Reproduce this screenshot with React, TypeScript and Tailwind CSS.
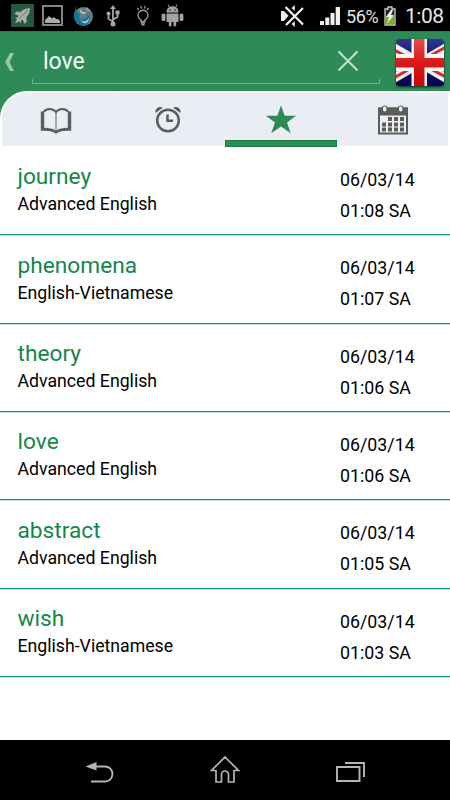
import React from 'react';

interface Entry {
  word: string;
  dictionary: string;
  date: string;
  time: string;
}

const entries: Entry[] = [
  { word: 'journey', dictionary: 'Advanced English', date: '06/03/14', time: '01:08 SA' },
  { word: 'phenomena', dictionary: 'English-Vietnamese', date: '06/03/14', time: '01:07 SA' },
  { word: 'theory', dictionary: 'Advanced English', date: '06/03/14', time: '01:06 SA' },
  { word: 'love', dictionary: 'Advanced English', date: '06/03/14', time: '01:06 SA' },
  { word: 'abstract', dictionary: 'Advanced English', date: '06/03/14', time: '01:05 SA' },
  { word: 'wish', dictionary: 'English-Vietnamese', date: '06/03/14', time: '01:03 SA' },
];

const StatusBar: React.FC = () => (
  <div className="h-[31px] shrink-0 bg-black flex items-center justify-between pl-[11px] pr-[7px]">
    <div className="flex items-center">
      <svg width="23" height="23" viewBox="0 0 23 23">
        <rect width="23" height="23" fill="#235a40" />
        <path d="M19 4c-4.500.2-7.500 1.700-9.500 4L5.500 7.500 3.500 10l4.200 1.800-1 1.500-2.700.4 2 1.400L4 19.500l4.300-2.200 1.400 2 .5-2.700 1.500-1 1.600 4.100 2.500-2-.5-4.400c2.300-2 3.500-5 3.700-9.300z" fill="#a9aeab" />
        <path d="M17 6 8 15" stroke="#235a40" strokeWidth=".6" fill="none" />
      </svg>
      <svg className="ml-2" width="21" height="21" viewBox="0 0 21 21">
        <rect x="1" y="1" width="19" height="19" fill="none" stroke="#929292" strokeWidth="1.800" />
        <path d="M3 18v-3l4-4 3 2.500 2-1.500 2 2h2l2 2v2z" fill="#aaa" />
      </svg>
      <svg className="ml-[10px]" width="21" height="23" viewBox="0 0 21 23">
        <circle cx="10.500" cy="12.500" r="9.500" fill="#657b82" />
        <path d="M5 1C2 5 3 9 7 10c-2 3 0 6 3 5 4 0 5-3 3-6 5 3 5 9 0 12C8 23 1 18 1 11 1 7 3 3 5 1z" fill="#16749a" />
        <path d="M7 4c0 3 3 5 7 4l-3 2c-3 0-5-3-4-6zM7 14c1 4 6 5 9 0 0 6-7 8-9 0z" fill="#b5c5ca" />
        <path d="M13 3c3 1 4 3 4 5l-4-2z" fill="#939b9e" />
      </svg>
      <svg className="ml-[12px]" width="14" height="22" viewBox="0 0 14 22">
        <path d="M7 3v16M7 16.500 2.500 14V9M7 14.500l4.500-2.500V7" fill="none" stroke="#a6a6a6" strokeWidth="1.800" />
        <path d="m7 0 3 4H4z" fill="#a6a6a6" />
        <circle cx="2.500" cy="8.500" r="2" fill="#a6a6a6" />
        <path d="M9.500 5.500h4v4h-4z" fill="#a6a6a6" />
        <circle cx="7" cy="19" r="2.500" fill="#a6a6a6" />
      </svg>
      <svg className="ml-[16px]" width="14" height="21" viewBox="0 0 13 21">
        <path d="M4.500 16.500v-1.700A5 5 0 1 1 8.500 14.800v1.700z" fill="none" stroke="#999" strokeWidth="1.400" />
        <path d="M4.500 18h4M5 19.800h3" stroke="#a8a8a8" strokeWidth="1.600" />
        <path d="M4.900 3.500 4.400.8M8.100 3.500 8.600.8M2.200 4.800.8 3M10.800 4.800 12.200 3" stroke="#999" strokeWidth="1.300" />
      </svg>
      <svg className="ml-[11px]" width="23" height="23" viewBox="0 0 23 23">
        <path d="M5.500 8.500C5.500 4.500 8 2.300 11.500 2.300s6 2.200 6 6.200zM5.500 9.500h12V18h-2.300v3.200a1.300 1.300 0 0 1-2.700 0V18h-2v3.200a1.300 1.300 0 0 1-2.700 0V18H5.500z" fill="#a3a3a3" />
        <rect x=".6" y="9.500" width="3.800" height="7.500" rx="1.600" fill="#a3a3a3" />
        <rect x="18.600" y="9.500" width="3.800" height="7.500" rx="1.600" fill="#a3a3a3" />
        <path d="m8.500 3.500-1.500-3M14.500 3.500l1.500-3" stroke="#a3a3a3" strokeWidth="1" />
        <circle cx="9" cy="6" r=".7" />
        <circle cx="14" cy="6" r=".7" />
      </svg>
    </div>
    <div className="flex items-center">
      <svg width="24" height="22" viewBox="0 0 24 22">
        <path d="M0 6h3l4.500 4.800L3 16H0zM10.500 3l3.300-3v6zM10.500 19l3.300 3v-6z" fill="#eee" />
        <path d="m4.500 2 17.500 17.500M22 3 5 20" stroke="#f3f3f3" strokeWidth="2.200" />
      </svg>
      <svg className="ml-[15px]" width="20" height="18" viewBox="0 0 20 18">
        <path d="M0 14h4v4H0zM5.300 10.500h4V18h-4zM10.500 6h4v12h-4zM15.700 0h4.300v18h-4.300z" fill="#f0f0f0" />
      </svg>
      <span className="ml-[6px] w-[34px] text-[18px] leading-[31px] tracking-[-0.4px] text-[#e4e4e4] pt-px whitespace-nowrap">56%</span>
      <svg className="ml-[3px]" width="14" height="20" viewBox="0 0 14 20">
        <path d="M2 3h3V1h4v2h3v16H2z" fill="#252b22" stroke="#cecece" strokeWidth="1.300" />
        <path d="M3 10h8v8H3z" fill="#72b900" />
        <path d="M8 4 3 11h3l-2 7 7-9H8l2-5z" fill="#f1f1f1" />
      </svg>
      <span className="ml-[8px] w-[38px] text-[21px] leading-[31px] tracking-[-0.5px] text-[#e6e6e6] pt-px whitespace-nowrap">1:08</span>
    </div>
  </div>
);

const Flag: React.FC = () => (
  <svg className="mt-[6px] h-[50px] w-[50px] drop-shadow-[0_1px_1px_rgba(0,0,0,0.7)]" viewBox="0 0 50 50">
    <defs>
      <clipPath id="flagClip">
        <rect x="1" y="1" width="48" height="47" rx="4" />
      </clipPath>
      <linearGradient id="flagBlue" x2="0" y2="1">
        <stop stopColor="#343794" />
        <stop offset=".4" stopColor="#14166d" />
        <stop offset="1" stopColor="#040451" />
      </linearGradient>
      <linearGradient id="flagRed" x2="0" y2="1">
        <stop stopColor="#e54d4c" />
        <stop offset=".5" stopColor="#d91818" />
        <stop offset="1" stopColor="#c70909" />
      </linearGradient>
    </defs>
    <g clipPath="url(#flagClip)">
      <path d="M0 0h50v50H0z" fill="url(#flagBlue)" />
      <path d="M-4 8 54 42M54 8-4 42" stroke="#f2f2f5" strokeWidth="9" />
      <path d="m-1 12 19 10M51 9 31 20M-1 40l19-11M51 39 32 29" stroke="#d82a2a" strokeWidth="3" />
      <path d="M16.500 0h15.500v50H16.500zM0 16h50v17H0z" fill="#f7f7f7" />
      <path d="M19 0h10.500v50H19zM0 20h50v9.500H0z" fill="url(#flagRed)" />
    </g>
  </svg>
);

const SearchHeader: React.FC = () => (
  <div className="h-[60px] shrink-0 flex bg-[#2e8b57] border-t border-[#38724f]">
    <svg className="mt-[20px] ml-[4px] h-[20px] w-[12px]" viewBox="0 0 12 20">
      <path d="M6 1h4L5.500 10l4.500 9H6L1.200 10z" fill="#99c7ac" />
    </svg>
    <div className="ml-[16px] mt-[9px] w-[348px] h-[43px] flex items-start justify-between relative">
      <span className="pl-[11px] text-[23px] leading-[24px] pt-[9px] text-[#f3faf5]">love</span>
      <svg className="mt-[9px] mr-[21px] h-[22px] w-[22px]" viewBox="0 0 22 22">
        <path d="m1.500 1.500 19 19M20.500 1.500l-19 19" stroke="#c5e0cf" strokeWidth="2" />
      </svg>
      <span className="absolute inset-x-0 bottom-0 h-[5px] border border-t-0 border-[#70b08b]" />
    </div>
    <div className="ml-[15px]">
      <Flag />
    </div>
  </div>
);

const BookIcon: React.FC = () => (
  <svg width="32" height="27" viewBox="0 0 32 27">
    <path d="M16 4v20" stroke="#62635f" strokeWidth="1" />
    <path d="M.8 4.500h3.400v16.300c5 0 8.500.7 11.800 2.900 3.300-2.200 6.800-2.900 11.800-2.900V4.500h3.400v19.300c-6 0-10 .2-13.200 1.800L16 26.800l-2-1.200C10.800 24 6.800 23.800.8 23.800z" fill="#5c5d5a" />
    <path d="M3.500 5C6.500.8 13 1 16 5c3-4 9.500-4.200 12.500 0" fill="none" stroke="#5c5d5a" strokeWidth="2" />
  </svg>
);

const AlarmIcon: React.FC = () => (
  <svg width="28" height="28" viewBox="0 0 28 28">
    <circle cx="14" cy="14.500" r="10.800" fill="none" stroke="#5c5d5a" strokeWidth="2.500" />
    <path d="M13.500 8.500v6.200H19" fill="none" stroke="#5c5d5a" strokeWidth="2.500" />
    <path d="M1.800 7C0 3.300 5-.5 9 1.600zM26.200 7C28 3.300 23-.5 19 1.600z" fill="#5c5d5a" />
  </svg>
);

const StarIcon: React.FC = () => (
  <svg width="32" height="30" viewBox="0 0 32 30">
    <path d="m16 .5 3.700 10.300h11.300l-9 6.700 3.800 10.700-9.800-6.700-9.800 6.700L10 17.500l-9-6.700h11.300z" fill="#2e8b57" />
  </svg>
);

const CalendarIcon: React.FC = () => (
  <svg width="32" height="30" viewBox="0 0 32 30">
    <rect x="2" y="3.500" width="28" height="25" fill="#edf0f4" stroke="#5c5d5a" strokeWidth="2" />
    <path d="M1 2.500h30v8H1z" fill="#5c5d5a" />
    <rect x="5.500" y="1" width="4.500" height="6" rx="2" fill="#edf0f4" stroke="#5c5d5a" strokeWidth="1.200" />
    <rect x="21.500" y="1" width="4.500" height="6" rx="2" fill="#edf0f4" stroke="#5c5d5a" strokeWidth="1.200" />
    <path d="M11 12h4v4h-4zM17 12h4v4h-4zM23 12h4v4h-4zM5 17.500h4v4H5zM11 17.500h4v4h-4zM17 17.500h4v4h-4zM23 17.500h4v4h-4zM5 22.500h4v4H5zM11 22.500h4v4h-4zM17 22.500h4v4h-4zM23 22.500h4v4h-4z" fill="#5c5d5a" />
  </svg>
);

const Tabs: React.FC = () => (
  <div className="h-[56px] shrink-0 bg-[#2e8b57]">
    <div className="h-full rounded-tl-[27px] bg-white pl-[2px] pr-[2px] pt-[2px]">
      <div className="h-[53px] rounded-tl-[25px] bg-[#eaedf3] grid grid-cols-4">
        <div className="flex justify-center pt-[14px] pr-[3px] border-r border-[#edf0f5]">
          <BookIcon />
        </div>
        <div className="flex justify-center pt-[13px] pr-[2px]">
          <AlarmIcon />
        </div>
        <div className="h-[54px] flex flex-col items-center justify-between pt-[12px]">
          <StarIcon />
          <div className="h-[7px] w-full bg-[#2e8b57] border border-[#15803f]" />
        </div>
        <div className="flex justify-center pt-[12px] pl-[2px]">
          <CalendarIcon />
        </div>
      </div>
    </div>
  </div>
);

const EntryRow: React.FC<{ entry: Entry }> = ({ entry }) => (
  <li className="h-[88.35px] flex justify-between border-b border-[#16918b] shadow-[0_1px_0_rgba(22,145,139,0.3)] pl-[17.500px] pr-[34px]">
    <div className="pt-[15.200px]">
      <div className="text-[22.700px] leading-[29px] text-[#148748]">{entry.word}</div>
      <div className="text-[17.700px] leading-[26px]">{entry.dictionary}</div>
    </div>
    <div className="w-[76px] pt-[17px] text-[17.800px] leading-[31px] whitespace-nowrap">
      <div>{entry.date}</div>
      <div>{entry.time}</div>
    </div>
  </li>
);

const NavBar: React.FC = () => (
  <div className="h-[60px] shrink-0 bg-black flex items-center justify-center gap-[96px]">
    <svg width="30" height="30" viewBox="0 0 30 30">
      <path d="M11 11.500h10a7.300 7.300 0 0 1 0 15H7" fill="none" stroke="#b5b5b5" strokeWidth="1.900" />
      <path d="M1.500 11.500 12.500 7v8.500z" fill="#b5b5b5" />
    </svg>
    <svg width="30" height="30" viewBox="0 0 30 30">
      <path d="M15 2 28.500 15.500h-4.500v11.500h-5.500v-7.500a3.500 3.500 0 0 0-7 0V27H6V15.500H1.500z" fill="none" stroke="#b5b5b5" strokeWidth="1.700" />
    </svg>
    <svg width="30" height="30" viewBox="0 0 30 30">
      <path d="M1 12h22.500v14H1zM9 8h19v14" fill="none" stroke="#b5b5b5" strokeWidth="1.900" />
    </svg>
  </div>
);

export default function App() {
  return (
    <div className="w-[450px] h-[800px] flex flex-col overflow-hidden bg-white text-black font-[Roboto,sans-serif]">
      <StatusBar />
      <SearchHeader />
      <Tabs />
      <ul className="flex-1 min-h-0">
        {entries.map((entry, i) => (
          <EntryRow key={i} entry={entry} />
        ))}
      </ul>
      <NavBar />
    </div>
  );
}
